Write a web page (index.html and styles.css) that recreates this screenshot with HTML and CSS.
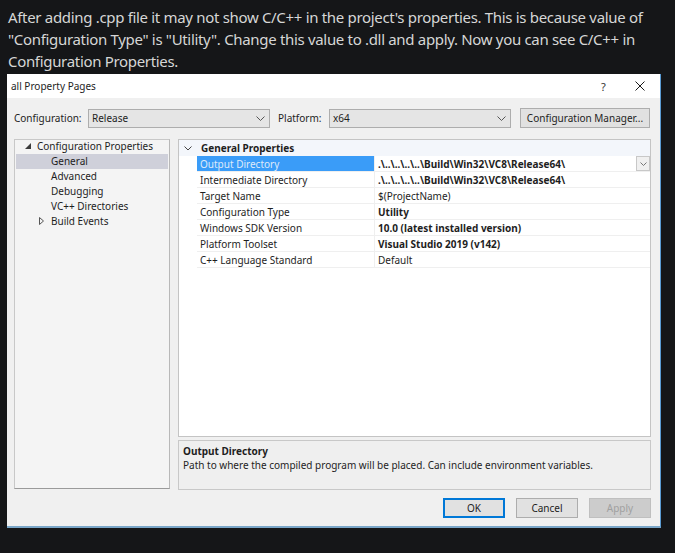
FILE: index.html
```html
<!DOCTYPE html>
<html>
<head>
<meta charset="utf-8">
<link rel="stylesheet" href="styles.css">
</head>
<body>
<p class="intro">After adding .cpp file it may not show C/C++ in the project's properties. This is because value of "Configuration Type" is "Utility". Change this value to .dll and apply. Now you can see C/C++ in Configuration Properties.</p>
<div class="dialog">
  <div class="titlebar">
    <span class="title">all Property Pages</span>
    <span class="help">?</span>
    <svg class="close" width="10" height="10" viewBox="0 0 10 10"><path d="M0.5 0.5L9.5 9.5M9.5 0.5L0.5 9.5" stroke="#1a1a1a" stroke-width="1" fill="none"/></svg>
  </div>
  <div class="body">
    <div class="config-row">
      <span class="lbl">Configuration:</span>
      <div class="combo"><span>Release</span><svg class="chev" width="9" height="5" viewBox="0 0 9 5"><path d="M0.5 0.5L4.5 4.5L8.5 0.5" stroke="#555" fill="none"/></svg></div>
      <span class="lbl plat">Platform:</span>
      <div class="combo"><span>x64</span><svg class="chev" width="9" height="5" viewBox="0 0 9 5"><path d="M0.5 0.5L4.5 4.5L8.5 0.5" stroke="#555" fill="none"/></svg></div>
      <div class="btn cm">Configuration Manager...</div>
    </div>
    <div class="main">
      <div class="tree">
        <div class="node first"><svg class="tri" width="6" height="6" viewBox="0 0 6 6"><path d="M6 0L6 6L0 6Z" fill="#3c3c3c"/></svg><span>Configuration Properties</span></div>
        <div class="node child sel"><span>General</span></div>
        <div class="node child"><span>Advanced</span></div>
        <div class="node child"><span>Debugging</span></div>
        <div class="node child"><span>VC++ Directories</span></div>
        <div class="node child"><svg class="tri2" width="5" height="8" viewBox="0 0 5 8"><path d="M0.5 0.5L4.5 4L0.5 7.5Z" stroke="#555" fill="none"/></svg><span>Build Events</span></div>
      </div>
      <div class="right">
        <div class="grid">
          <div class="ghead"><svg class="gchev" width="8" height="5" viewBox="0 0 8 5"><path d="M0.5 0.5L4 4L7.5 0.5" stroke="#444" fill="none"/></svg><span>General Properties</span></div>
          <div class="row sel"><span class="name">Output Directory</span><span class="val b">.\..\..\..\..\Build\Win32\VC8\Release64\</span><span class="ddbtn"><svg width="7" height="4" viewBox="0 0 7 4"><path d="M0.5 0.5L3.5 3.5L6.5 0.5" stroke="#777" fill="none"/></svg></span></div>
          <div class="row"><span class="name">Intermediate Directory</span><span class="val b">.\..\..\..\..\Build\Win32\VC8\Release64\</span></div>
          <div class="row"><span class="name">Target Name</span><span class="val">$(ProjectName)</span></div>
          <div class="row"><span class="name">Configuration Type</span><span class="val b">Utility</span></div>
          <div class="row"><span class="name">Windows SDK Version</span><span class="val b">10.0 (latest installed version)</span></div>
          <div class="row"><span class="name">Platform Toolset</span><span class="val b">Visual Studio 2019 (v142)</span></div>
          <div class="row"><span class="name">C++ Language Standard</span><span class="val">Default</span></div>
        </div>
        <div class="desc">
          <div class="dtitle">Output Directory</div>
          <div class="dtext">Path to where the compiled program will be placed. Can include environment variables.</div>
        </div>
      </div>
    </div>
    <div class="buttons">
      <div class="btn ok">OK</div>
      <div class="btn">Cancel</div>
      <div class="btn dis">Apply</div>
    </div>
  </div>
</div>
</body>
</html>
```
FILE: styles.css
```css
html, body {
  margin: 0;
  padding: 0;
  background: #151618;
  height: 100%;
}
.intro {
  margin: 0;
  padding: 6px 22px 0 8px;
  height: 68px;
  font-family: "Noto Sans", sans-serif;
  font-size: 15px;
  letter-spacing: -0.32px;
  line-height: 22px;
  color: #d6d6d6;
}
.dialog {
  margin-left: 7px;
  width: 654px;
  height: 454px;
  display: flex;
  flex-direction: column;
  background: #f0f0f0;
  font-family: "Noto Sans", sans-serif;
  font-size: 10px;
  color: #1e1e1e;
  box-sizing: border-box;
  border-right: 1px solid #5a9bd3;
  border-bottom: 2px solid #7aa6c8;
}
.titlebar {
  height: 24px;
  flex: none;
  background: #ffffff;
  display: flex;
  align-items: center;
  padding-left: 4px;
}
.title { flex: 1; font-size: 10px; }
.help { width: 10px; margin-right: 24px; font-size: 11px; color: #333; }
.close { margin-right: 15px; }
.body {
  flex: 1;
  display: flex;
  flex-direction: column;
  padding: 10px 9px 0 7px;
}
.config-row {
  display: flex;
  align-items: center;
  height: 20px;
}
.lbl { width: 74px; }
.plat { width: 51px; margin-left: 8px; }
.combo {
  width: 182px;
  height: 19px;
  box-sizing: border-box;
  border: 1px solid #adadad;
  background: #e5e5e5;
  display: flex;
  align-items: center;
  justify-content: space-between;
  padding: 0 4px 0 3px;
}
.btn {
  height: 20px;
  box-sizing: border-box;
  border: 1px solid #adadad;
  background: #e1e1e1;
  display: flex;
  align-items: center;
  justify-content: center;
  width: 62px;
}
.cm { width: 130px; margin-left: 9px; }
.main {
  display: flex;
  margin-top: 11px;
  height: 351px;
}
.tree {
  width: 156px;
  height: 350px;
  box-sizing: border-box;
  border: 1px solid #c8c8c8;
  border-bottom-color: #9a9a9a;
  border-right-color: #b8b8b8;
  background: #f4f4f4;
}
.node {
  height: 15px;
  box-sizing: border-box;
  padding-bottom: 2px;
  display: flex;
  align-items: center;
  padding-left: 10px;
}
.node.first { height: 14px; }
.tri { margin-right: 6px; margin-top: 0; }
.child { padding-left: 36px; }
.child .tri2 { margin-left: -12px; margin-right: 7px; }
.node.sel { background: #cfd0da; margin: 0 1px; padding-left: 35px; }
.right {
  margin-left: 8px;
  width: 473px;
  display: flex;
  flex-direction: column;
}
.grid {
  height: 298px;
  box-sizing: border-box;
  border: 1px solid #c4c4c4;
  background: #ffffff;
}
.ghead {
  height: 16px;
  background: #f3f6fb;
  display: flex;
  align-items: center;
  font-weight: bold;
  padding-left: 5px;
}
.gchev { margin-right: 9px; }
.row {
  height: 16px;
  display: flex;
  align-items: center;
  margin-left: 18px;
  border-bottom: 1px solid #efefef;
  box-sizing: border-box;
  position: relative;
}
.name {
  width: 178px;
  box-sizing: border-box;
  padding-left: 3px;
  height: 100%;
  display: flex;
  align-items: center;
  border-right: 1px solid #efefef;
}
.val { padding-left: 3px; }
.b { font-weight: bold; }
.row.sel .name { background: #3a9cf8; color: #dfeafa; }
.ddbtn {
  position: absolute;
  right: 0;
  top: 0;
  width: 14px;
  height: 15px;
  box-sizing: border-box;
  border: 1px solid #c8c8c8;
  background: #f0f0f0;
  display: flex;
  align-items: center;
  justify-content: center;
}
.desc {
  margin-top: 3px;
  height: 50px;
  box-sizing: border-box;
  border: 1px solid #c8c8c8;
  background: #efefef;
  padding: 3px 4px;
}
.dtitle { font-weight: bold; line-height: 14px; }
.dtext { line-height: 15px; }
.buttons {
  display: flex;
  justify-content: flex-end;
  gap: 11px;
  margin-top: 8px;
}
.buttons .btn { width: 62px; height: 20px; }
.btn.ok { border: 2px solid #0078d7; }
.btn.dis { background: #cccccc; border-color: #bfbfbf; color: #a0a0a0; }
```
